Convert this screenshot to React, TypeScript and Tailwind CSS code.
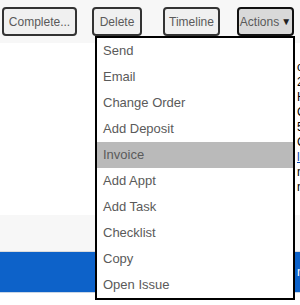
import React from "react";

const items = [
    "Send",
    "Email",
    "Change Order",
    "Add Deposit",
    "Invoice",
    "Add Appt",
    "Add Task",
    "Checklist",
    "Copy",
    "Open Issue",
];

const lines = ["opened", "2024", "Home", "Customer", "555", "City"];

function ToolButton({
    label,
    className,
}: {
    label: React.ReactNode;
    className: string;
}) {
    return (
        <button
            className={`h-[29px] rounded-[4px] border-2 text-[12px] text-[#5a5a5a] flex items-center justify-center ${className}`}
        >
            {label}
        </button>
    );
}

export default function App() {
    return (
        <div
            className="relative w-[300px] h-[305px] overflow-hidden bg-white"
            style={{ fontFamily: '"Liberation Sans", Arial, sans-serif' }}
        >
            <div className="h-[43px] bg-[#f7f7f7] flex items-start pt-[7px] pl-[2px]">
                <ToolButton
                    label="Complete..."
                    className="w-[75px] border-[#333] bg-[#f0f0f0]"
                />
                <ToolButton
                    label="Delete"
                    className="w-[50px] ml-[15px] border-[#333] bg-[#f0f0f0]"
                />
                <ToolButton
                    label="Timeline"
                    className="w-[57px] ml-[21px] border-[#333] bg-[#f0f0f0]"
                />
                <ToolButton
                    label={
                        <span className="flex items-center gap-[2px]">
                            Actions
                            <span className="text-[10px] text-[#222]">▼</span>
                        </span>
                    }
                    className="w-[57px] ml-[17px] border-[#111] bg-[#d9d9d9]"
                />
            </div>

            <div className="h-[172px] pl-[297px] pt-[17px] text-[12px] leading-[15px] text-black whitespace-nowrap">
                {lines.map((l) => (
                    <div key={l}>{l}</div>
                ))}
                <div className="text-[#0645ad] underline">location</div>
                <div>notes</div>
                <div>name</div>
            </div>

            <div className="h-[37px] bg-[#f7f7f7] border-b border-[#dcdcdc]" />
            <div className="h-[41px] bg-[#0d62c9] border-b border-[#c9d6e6] pl-[297px] text-white text-[12px] flex items-center whitespace-nowrap">
                new
            </div>

            <div className="absolute left-[95px] top-[36px] w-[200px] border-2 border-black bg-white">
                {items.map((item) => (
                    <div
                        key={item}
                        className={`h-[26px] pl-[6px] flex items-center text-[13px] text-[#5a5a5a] ${
                            item === "Invoice" ? "bg-[#bababa]" : ""
                        }`}
                    >
                        {item}
                    </div>
                ))}
            </div>
        </div>
    );
}
